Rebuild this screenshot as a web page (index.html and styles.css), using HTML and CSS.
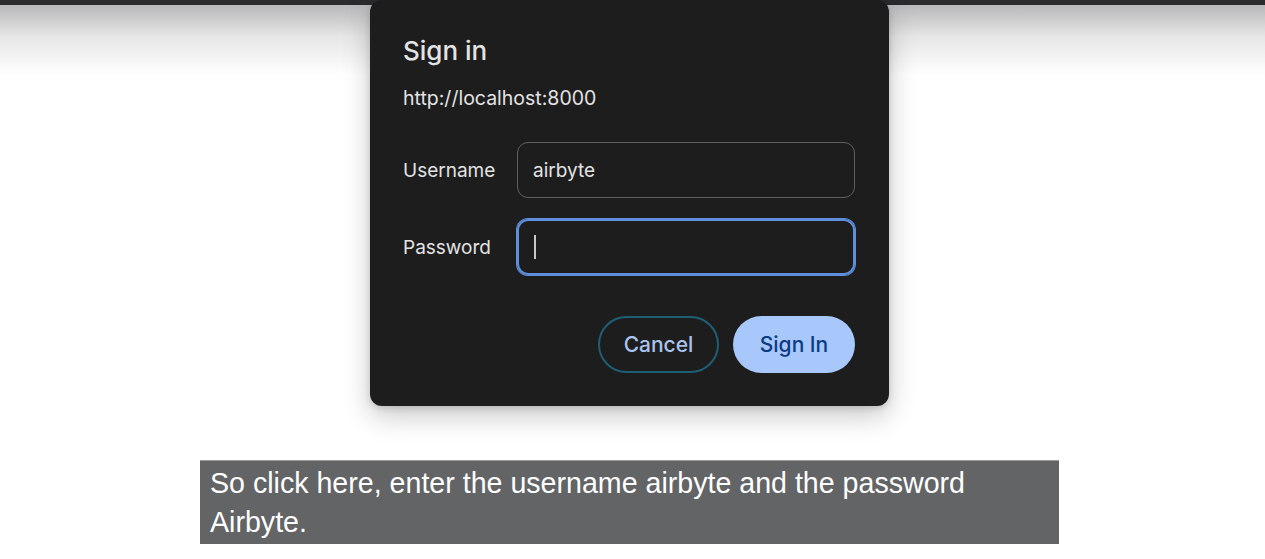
FILE: index.html
```html
<!DOCTYPE html>
<html>
<head>
<meta charset="utf-8">
<link rel="stylesheet" href="styles.css">
</head>
<body>
<div class="page">
  <div class="topbar"></div>
  <div class="fade"></div>
</div>
<div class="dialog">
  <h1 class="title">Sign in</h1>
  <p class="origin">http://localhost:8000</p>
  <div class="form">
    <label class="label">Username</label>
    <div class="field"><span class="value">airbyte</span></div>
    <label class="label">Password</label>
    <div class="field focused"><span class="caret"></span></div>
  </div>
  <div class="actions">
    <button class="btn cancel">Cancel</button>
    <button class="btn primary">Sign In</button>
  </div>
</div>
<div class="caption">So click here, enter the username airbyte and the password<br>Airbyte.</div>
</body>
</html>
```
FILE: styles.css
```css
html, body { margin: 0; padding: 0; }
body {
  width: 1265px;
  height: 559px;
  background: #ffffff;
  overflow: hidden;
  position: relative;
  font-family: Inter, "Noto Sans", sans-serif;
}
.page { display: flex; flex-direction: column; }
.topbar { height: 5px; background: #2b2b2d; }
.fade {
  height: 70px;
  background: linear-gradient(#b8b8ba, #e6e6e6 45%, #ffffff);
}
.dialog {
  position: absolute;
  left: 370px;
  top: 0;
  width: 519px;
  height: 406px;
  box-sizing: border-box;
  padding: 34px 34px 0 33px;
  background: #1d1d1e;
  border-radius: 12px;
  box-shadow: 0 10px 28px rgba(0,0,0,0.22), 0 2px 6px rgba(0,0,0,0.15);
  color: #e3e3e3;
  display: flex;
  flex-direction: column;
}
.title {
  margin: 0;
  font-size: 26px;
  font-weight: 500;
  line-height: 34px;
  color: #e3e3e3;
}
.origin {
  margin: 19px 0 0;
  font-size: 19.5px;
  line-height: 22px;
  color: #e3e3e3;
}
.form {
  margin-top: 33px;
  display: grid;
  grid-template-columns: 114px 338px;
  row-gap: 21px;
  align-items: center;
}
.label { font-size: 19px; color: #e3e3e3; }
.field {
  height: 56px;
  box-sizing: border-box;
  border: 1px solid #5f5f61;
  border-radius: 11px;
  display: flex;
  align-items: center;
  padding-left: 15px;
}
.value { font-size: 19px; color: #e3e3e3; }
.field.focused {
  border: 2px solid #5f8fdc;
  box-shadow: 0 0 0 1px #5f8fdc;
  padding-left: 15px;
}
.caret { width: 2px; height: 24px; background: #c8c8c8; }
.actions {
  margin-top: 41px;
  display: flex;
  justify-content: flex-end;
  gap: 14px;
}
.btn {
  height: 57px;
  border-radius: 29px;
  font-family: Inter, "Noto Sans", sans-serif;
  font-size: 21px;
  font-weight: 500;
  cursor: pointer;
}
.cancel {
  width: 121px;
  background: transparent;
  border: 2px solid #1e5f74;
  color: #a9c3ec;
}
.primary {
  width: 122px;
  background: #a8c7fa;
  border: none;
  color: #0b3b82;
}
.caption {
  position: absolute;
  left: 200px;
  top: 460px;
  width: 859px;
  height: 84px;
  box-sizing: border-box;
  padding: 3px 10px 0;
  background: #636466;
  border-top: 1px solid #9a9a9a;
  color: #ffffff;
  font-family: "Liberation Sans", Arial, sans-serif;
  font-size: 28.6px;
  line-height: 39px;
}
```
